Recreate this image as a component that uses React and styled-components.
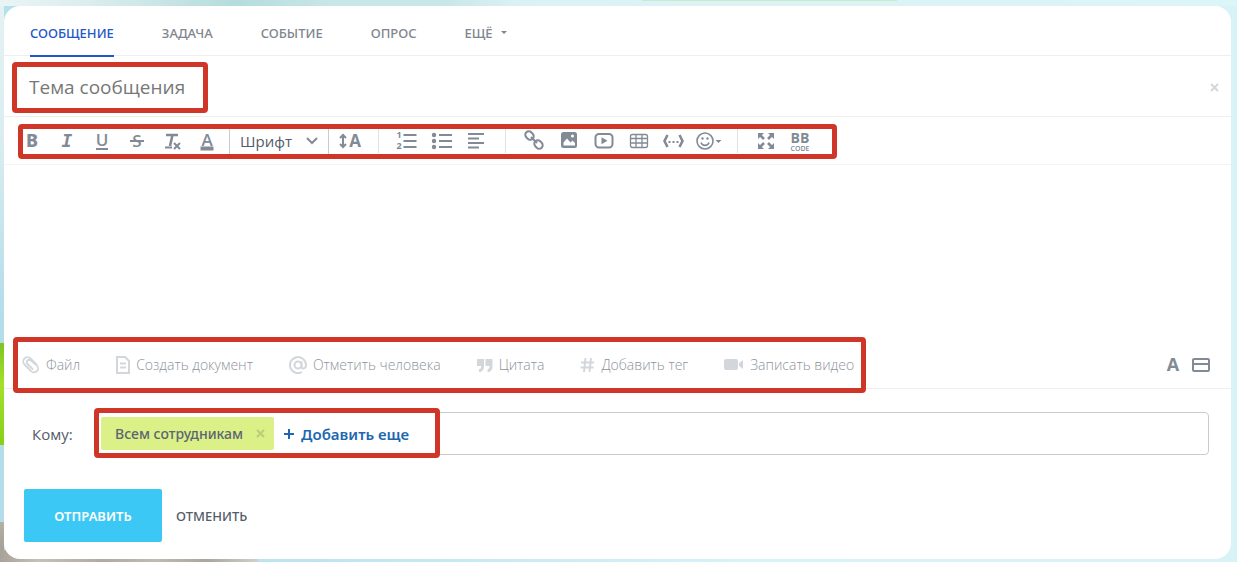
import React, { useState } from "react"
import styled, { createGlobalStyle } from "styled-components"

const GlobalStyle = createGlobalStyle`
  * {
    box-sizing: border-box;
  }

  body {
    margin: 0;
    font-family: "Open Sans", "Noto Sans", sans-serif;
    font-size: 14px;
    color: #535c69;
  }

  button, input, select, textarea {
    font-family: inherit;
  }
`

const Page = styled.div`
  min-height: 100vh;
  padding: 6px 6px 3px 4px;
  display: flex;
  background:
    linear-gradient(#cce9cf, #cce9cf) 642px 0 / 255px 1px no-repeat,
    linear-gradient(90deg, #eaf4f5, #d9ecec 8%, #b5dcdc 19%, #c8e7e9 27%, #c8e7e9 36%, #dcf1f5 42%, #dcf5f6) 0 0 / 100% 6px no-repeat,
    linear-gradient(90deg, #a8a298, #c6c1b6 15%, #b0aaa0 40%, #c0bbb0 60%, #aaa69c 80%, #d0d0ca) 0 100% / 258px 12px no-repeat,
    linear-gradient(#b5b0a6, #9f998f) 0 100% / 4px 40px no-repeat,
    linear-gradient(#7cc423, #a4e02a 40%, #86d018) 0 343px / 4px 102px no-repeat,
    linear-gradient(#e6f2f4, #d9edf0 25%, #b4ddea 55%, #b4ddea) 0 0 / 4px 100% no-repeat,
    linear-gradient(90deg, #b4e0ec, #bfe4ee 25%, #d6f3f7 60%, #d8f3f8);
`

const Card = styled.main`
  flex: 1;
  display: flex;
  flex-direction: column;
  background: #fff;
  border-radius: 16px;
`

const Frame = styled.div`
  position: relative;

  &::after {
    content: "";
    position: absolute;
    inset: ${props => props.$inset || "0"};
    border: 5px solid #d03627;
    border-radius: 4px;
    pointer-events: none;
  }
`

const Tabs = styled.nav`
  height: 50px;
  padding: 0 26px;
  display: flex;
  gap: 48px;
  border-bottom: 1px solid #eceef0;
`

const Tab = styled.a`
  height: 51px;
  padding-top: 4px;
  display: flex;
  align-items: center;
  gap: 8px;
  font-family: "Noto Sans", sans-serif;
  font-size: 13px;
  font-weight: 500;
  color: ${props => (props.$active ? "#1f58c8" : "#80868e")};
  border-bottom: 2px solid ${props => (props.$active ? "#1f58c8" : "transparent")};
  text-decoration: none;
`

const Caret = styled.span`
  border: 3px solid transparent;
  border-top-color: currentColor;
  border-bottom: 0;
`

const TitleRow = styled.div`
  height: 61px;
  padding: 2px 12px 0 8px;
  display: flex;
  align-items: center;
  justify-content: space-between;
  border-bottom: 1px solid #eceef0;
`

const TitleInput = styled.input`
  width: 196px;
  height: 51px;
  padding: 0 17px;
  display: block;
  border: 0;
  outline: none;
  background: none;
  font-size: 19px;
  color: #535c69;

  &::placeholder {
    color: #777;
    opacity: 1;
  }
`

const IconButton = styled.button`
  padding: 0;
  display: flex;
  align-items: center;
  justify-content: center;
  border: 0;
  background: none;
  color: ${props => props.$color || "#828b95"};
  cursor: pointer;
`

const Toolbar = styled.div`
  height: 48px;
  padding: 0 10px;
  display: flex;
  align-items: center;
  border-bottom: 1px solid #f3f4f5;
`

const Tools = styled(Frame)`
  display: flex;
  align-items: center;
`

const Tool = styled(IconButton)`
  width: 35px;
  height: 24px;
`

const Separator = styled.span`
  width: 1px;
  height: 24px;
  margin: 0 10px 0 11px;
  background: #e0e3e6;
`

const FontField = styled.label`
  width: 100px;
  height: 26px;
  margin: 0 3px 0 5px;
  padding: 0 10px;
  display: flex;
  align-items: center;
  border: 1px solid #c6cdd3;
  border-width: 0 1px;
  color: #828b95;
`

const FontSelect = styled.select`
  flex: 1;
  min-width: 0;
  padding: 0;
  appearance: none;
  border: 0;
  outline: none;
  background: none;
  font-size: 15px;
  color: #535c69;
`

const Editor = styled.textarea`
  flex: 1;
  min-height: 120px;
  padding: 16px 26px;
  border: 0;
  outline: none;
  resize: none;
  background: none;
  font-size: 14px;
`

const AttachRow = styled.div`
  height: 48px;
  padding: 0 21px 0 18px;
  display: flex;
  align-items: center;
  justify-content: space-between;
  border-bottom: 1px solid #eceef0;
`

const AttachList = styled(Frame)`
  display: flex;
  gap: 36px;
`

const AttachButton = styled.button`
  height: 24px;
  padding: 0;
  display: flex;
  align-items: center;
  gap: 6px;
  border: 0;
  background: none;
  font-size: 14px;
  font-weight: 300;
  color: #8d949c;
  white-space: nowrap;
  cursor: pointer;

  svg {
    color: #d3d7dc;
  }
`

const ViewButtons = styled.div`
  display: flex;
  gap: 10px;
`

const Recipients = styled.div`
  padding: 23px 22px 0 28px;
  display: flex;
  align-items: center;
`

const RecipientsLabel = styled.span`
  width: 64px;
  font-size: 15px;
`

const RecipientsBox = styled.div`
  flex: 1;
  height: 43px;
  padding-left: 4px;
  display: flex;
  align-items: center;
  border: 1px solid #c6cdd3;
  border-radius: 4px;
`

const RecipientsList = styled(Frame)`
  display: flex;
  align-items: center;
  gap: 10px;
`

const Tag = styled.span`
  height: 33px;
  padding: 0 9px 0 14px;
  display: flex;
  align-items: center;
  gap: 13px;
  border-radius: 2px;
  background: #dbf087;
  font-family: "Noto Sans", sans-serif;
  font-weight: 500;
  color: #5b6573;
`

const AddLink = styled.a`
  display: flex;
  align-items: center;
  gap: 7px;
  font-family: "Noto Sans", sans-serif;
  font-size: 15px;
  font-weight: 600;
  color: #2067b0;
  text-decoration: none;
`

const Actions = styled.div`
  padding: 34px 20px 17px;
  display: flex;
  gap: 14px;
`

const ActionButton = styled.button`
  height: 53px;
  padding: 0;
  border: 0;
  border-radius: 2px;
  background: none;
  font-family: "Noto Sans", sans-serif;
  font-size: 13px;
  font-weight: 500;
  color: #535c69;
  cursor: pointer;
`

const SubmitButton = styled(ActionButton)`
  width: 138px;
  background: #3bc8f5;
  font-weight: 600;
  color: #fff;
`

const Icon = ({ width = 24, height = 24, stroke = 2, children }) => (
  <svg
    width={width}
    height={height}
    viewBox={`0 0 ${width} ${height}`}
    fill="none"
    stroke="currentColor"
    strokeWidth={stroke}
    aria-hidden="true"
  >
    {children}
  </svg>
)

const Letter = ({ size = 18, weight = 700, x = 12, y = 18, ...rest }) => (
  <text
    x={x}
    y={y}
    fontSize={size}
    fontWeight={weight}
    textAnchor="middle"
    fill="currentColor"
    stroke="none"
    {...rest}
  />
)

const Cross = ({ size = 9, stroke = 2 }) => (
  <Icon width={size} height={size} stroke={stroke}>
    <path d={`M1 1L${size - 1} ${size - 1}M${size - 1} 1L1 ${size - 1}`} />
  </Icon>
)

const textTools = [
  ["Полужирный", <Letter fontFamily="Noto Sans" weight={800}>B</Letter>],
  ["Курсив", <Letter fontFamily="DejaVu Sans Mono" fontStyle="italic">I</Letter>],
  ["Подчёркнутый", <><Letter size={17} weight={600} y={17}>U</Letter><path d="M6 20h12" /></>],
  ["Зачёркнутый", <><Letter size={17} weight={600}>S</Letter><path d="M5 12h14" /></>],
  [
    "Очистить",
    <>
      <path d="M6 6h12M12.500 6L10 17" strokeWidth="2.600" />
      <path d="M5 18.500h7M14 14l6 6M20 14l-6 6" />
    </>,
  ],
  ["Цвет текста", <><Letter size={17} weight={600} y={17}>A</Letter><path d="M5.500 19.500h13" strokeWidth="4" /></>],
]

const listTools = [
  [
    "Нумерованный список",
    <>
      <Letter size={9}>
        <tspan x="4" y="9">1</tspan>
        <tspan x="4" y="20">2</tspan>
      </Letter>
      <path d="M8.500 6h13M8.500 12h13M8.500 18h13" />
    </>,
  ],
  [
    "Список",
    <>
      <path d="M9 6h13M9 12h13M9 18h13" />
      <g fill="currentColor" stroke="none">
        <circle cx="4" cy="6" r="2.200" />
        <circle cx="4" cy="12" r="2.200" />
        <circle cx="4" cy="18" r="2.200" />
      </g>
    </>,
  ],
  ["Выравнивание", <path d="M3 5h16M3 9.500h11M3 14h16M3 18.500h11" />],
]

const insertTools = [
  [
    "Ссылка",
    <>
      <rect x="-4.500" y="-3.500" width="9" height="7" rx="3.500" transform="translate(7.500 6.500) rotate(45)" />
      <rect x="-4.500" y="-3.500" width="9" height="7" rx="3.500" transform="translate(16.500 15.500) rotate(45)" />
      <path d="M9 8l6 6" />
    </>,
  ],
  [
    "Изображение",
    <>
      <rect x="4" y="3" width="16" height="16" rx="2.500" fill="currentColor" stroke="none" />
      <path d="M6.500 16.500v-3l3.500-4 3.500 4 2-2 2.500 2.500v2.500z" fill="#fff" stroke="none" />
      <circle cx="15.500" cy="7" r="1.500" fill="#fff" stroke="none" />
    </>,
  ],
  [
    "Видео",
    <>
      <rect x="3.500" y="5" width="17" height="13.500" rx="3.500" />
      <path d="M9.500 8.200v7l6-3.500z" fill="currentColor" stroke="none" />
    </>,
  ],
  [
    "Таблица",
    <g strokeWidth="1.300">
      <rect x="3.500" y="5.500" width="17" height="13" rx="2" />
      <path d="M9 5.500v13M15 5.500v13M3.500 9.500h17M3.500 14h17" />
    </g>,
  ],
  [
    "Код",
    <>
      <path d="M5.500 6L2.500 12l3 6M17.500 6l3 6-3 6" strokeWidth="2.600" />
      <path d="M6.500 13h2M10.500 13h2M14.500 13h2" />
    </>,
  ],
  [
    "Смайл",
    <>
      <circle cx="9" cy="12" r="8" strokeWidth="1.600" />
      <path d="M5 13.500a4.200 4.200 0 0 0 8 0" strokeWidth="1.600" />
      <circle cx="6.500" cy="9.500" r="1.200" fill="currentColor" stroke="none" />
      <circle cx="11.500" cy="9.500" r="1.200" fill="currentColor" stroke="none" />
      <path d="M19.500 11h6l-3 3z" fill="currentColor" stroke="none" />
    </>,
    26,
  ],
]

const viewTools = [
  [
    "На весь экран",
    <>
      <path d="M6 6l4 4M18 6l-4 4M6 18l4-4M18 18l-4-4" strokeWidth="2.600" />
      <path
        d="M4 4h6l-6 6zM20 4h-6l6 6zM4 20h6l-6-6zM20 20h-6l6-6z"
        fill="currentColor"
        stroke="none"
      />
    </>,
  ],
  [
    "BB-код",
    <Letter size={14}>
      <tspan x="11" y="14">BB</tspan>
      <tspan x="11" y="22" fontSize="7" fontWeight="600">CODE</tspan>
    </Letter>,
  ],
]

const attachments = [
  [
    "Файл",
    18,
    <path d="M14.500 8.500L8.500 2.500a4.200 4.200 0 0 0-6 6l6.500 6.500a4 4 0 0 0 6-5.500L9 4.500a2.400 2.400 0 0 0-3.500 3.500l5.500 5.500" strokeWidth="1.800" />,
  ],
  ["Создать документ", 14, <path d="M1 1h8l4 4v12H1zM4 7.500h6M4 11.500h6" />],
  [
    "Отметить человека",
    18,
    <>
      <circle cx="9" cy="9" r="3.500" />
      <path d="M12.500 5.500v5c0 3 4.500 2.500 4.500-1.500a8 8 0 1 0-4 7" />
    </>,
  ],
  [
    "Цитата",
    16,
    <path d="M0 3h7v7c0 4-2 6-5 6v-3c2 0 2-2 2-3H0zM8.500 3h7v7c0 4-2 6-5 6v-3c2 0 2-2 2-3h-4z" fill="currentColor" stroke="none" />,
  ],
  ["Добавить тег", 15, <path d="M5.500 2L4 16M11 2L9.500 16M1 6.500h13M0.500 11.500h13" />],
  [
    "Записать видео",
    20,
    <path d="M2 3h10a2 2 0 0 1 2 2v7a2 2 0 0 1-2 2H2a2 2 0 0 1-2-2V5a2 2 0 0 1 2-2zM15 7l4-3v9l-4-3z" fill="currentColor" stroke="none" />,
  ],
]

const ToolGroup = ({ tools }) =>
  tools.map(([label, drawing, width]) => (
    <Tool key={label} type="button" aria-label={label}>
      <Icon width={width}>{drawing}</Icon>
    </Tool>
  ))

const tabs = ["СООБЩЕНИЕ", "ЗАДАЧА", "СОБЫТИЕ", "ОПРОС", "ЕЩЁ"]

const App = () => {
  const [active, setActive] = useState(tabs[0])
  return (
    <>
      <GlobalStyle />
      <Page>
        <Card>
          <Tabs>
            {tabs.map(tab => (
              <Tab key={tab} href="#" $active={tab === active} onClick={() => setActive(tab)}>
                {tab}
                {tab === "ЕЩЁ" && <Caret />}
              </Tab>
            ))}
          </Tabs>
          <TitleRow>
            <Frame>
              <TitleInput aria-label="Тема сообщения" placeholder="Тема сообщения" />
            </Frame>
            <IconButton type="button" aria-label="Закрыть" $color="#d3d7dc">
              <Cross />
            </IconButton>
          </TitleRow>
          <Toolbar>
            <Tools $inset="-4px -19px -5px 4px">
              <ToolGroup tools={textTools} />
              <FontField>
                <FontSelect aria-label="Шрифт">
                  <option>Шрифт</option>
                </FontSelect>
                <Icon width={12} height={12}>
                  <path d="M1 3l5 5 5-5" />
                </Icon>
              </FontField>
              <Tool type="button" aria-label="Размер шрифта">
                <Icon>
                  <Letter size={17} x={17}>A</Letter>
                  <path d="M5 7v10M2 9l3-3 3 3M2 15l3 3 3-3" />
                </Icon>
              </Tool>
              <Separator />
              <ToolGroup tools={listTools} />
              <Separator />
              <ToolGroup tools={insertTools} />
              <Separator />
              <ToolGroup tools={viewTools} />
            </Tools>
          </Toolbar>
          <Editor aria-label="Текст сообщения" />
          <AttachRow>
            <AttachList $inset="-16px -12px -16px -9px">
              {attachments.map(([label, width, drawing]) => (
                <AttachButton key={label} type="button">
                  <Icon width={width} height={18}>{drawing}</Icon>
                  {label}
                </AttachButton>
              ))}
            </AttachList>
            <ViewButtons>
              <IconButton type="button" aria-label="Панель форматирования">
                <Icon width={18}>
                  <Letter x={9}>A</Letter>
                </Icon>
              </IconButton>
              <IconButton type="button" aria-label="Тема">
                <Icon width={18} height={14}>
                  <rect x="1" y="1" width="16" height="12" rx="1" />
                  <path d="M1 6h16" />
                </Icon>
              </IconButton>
            </ViewButtons>
          </AttachRow>
          <Recipients>
            <RecipientsLabel>Кому:</RecipientsLabel>
            <RecipientsBox>
              <RecipientsList $inset="-9px -31px -8px -7px">
                <Tag>
                  Всем сотрудникам
                  <IconButton type="button" aria-label="Удалить" $color="#b9cf7a">
                    <Cross />
                  </IconButton>
                </Tag>
                <AddLink href="#">
                  <Icon width={10} height={10}>
                    <path d="M5 0v10M0 5h10" />
                  </Icon>
                  Добавить еще
                </AddLink>
              </RecipientsList>
            </RecipientsBox>
          </Recipients>
          <Actions>
            <SubmitButton type="submit">ОТПРАВИТЬ</SubmitButton>
            <ActionButton type="button">ОТМЕНИТЬ</ActionButton>
          </Actions>
        </Card>
      </Page>
    </>
  )
}

export default App
